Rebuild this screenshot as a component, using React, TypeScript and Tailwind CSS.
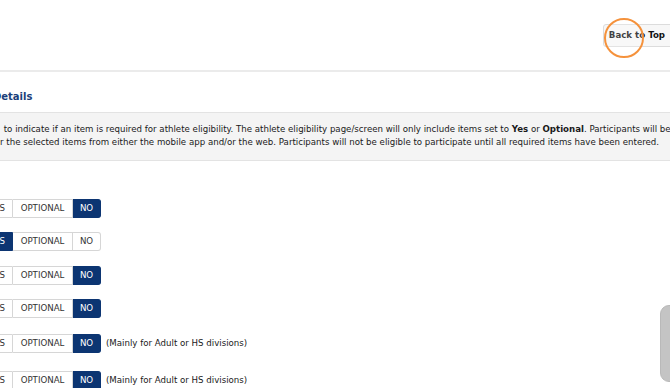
import React from "react";

type Sel = "YES" | "OPTIONAL" | "NO";

function Seg({ sel }: { sel: Sel }) {
  const base = "flex h-[19px] items-center justify-center border";
  const on = "bg-[#0c3572] border-[#0c3572] text-white";
  const off = "bg-white border-[#d6d6d6] text-[#333]";
  return (
    <div className="-ml-[19px] flex">
      <div className={`${base} w-[32px] rounded-l-[3px] ${sel === "YES" ? on : off}`}>YES</div>
      <div className={`${base} w-[60px] border-l-0 ${sel === "OPTIONAL" ? on : off}`}>OPTIONAL</div>
      <div className={`${base} w-[28px] border-l-0 rounded-r-[3px] ${sel === "NO" ? on : off}`}>NO</div>
    </div>
  );
}

export default function App() {
  const rows: { sel: Sel; note?: boolean; mt: string }[] = [
    { sel: "NO", mt: "mt-[38px]" },
    { sel: "YES", mt: "mt-[14px]" },
    { sel: "NO", mt: "mt-[15px]" },
    { sel: "NO", mt: "mt-[14px]" },
    { sel: "NO", note: true, mt: "mt-[16px]" },
    { sel: "NO", note: true, mt: "mt-[18px]" },
  ];
  return (
    <div className="relative h-[388px] w-[670px] overflow-hidden bg-white font-['DejaVu_Sans',Verdana,sans-serif] text-[8.65px] text-[#1a1a1a]">
      <div className="flex h-[72px] items-start justify-end border-b-2 border-[#ebebeb] pt-[24px]">
        <div className="-mr-[3px] flex h-[23px] items-center rounded-[3px] border border-[#dcdcdc] bg-[#f7f7f7] pl-[5px] pr-[7px] font-bold text-[#111]">
          Back to Top
        </div>
      </div>

      <div className="-ml-[7px] mt-[18px] text-[10px] font-bold leading-[13px] text-[#1a3f7a]">Details</div>

      <div className="mt-[9px] border-y border-[#e3e3e3] bg-[#f4f4f4] pt-[10px] pb-[11px] leading-[13px]">
        <div className="whitespace-pre pl-[1px]">
          {" to indicate if an item is required for athlete eligibility. The athlete eligibility page/screen will only include items set to "}
          <b>Yes</b> or <b>Optional</b>. Participants will be
        </div>
        <div className="whitespace-pre">
          r the selected items from either the mobile app and/or the web. Participants will not be eligible to participate until all required items have been entered.
        </div>
      </div>

      <div className="flex flex-col">
        {rows.map((r, i) => (
          <div key={i} className={`flex items-center ${r.mt}`}>
            <Seg sel={r.sel} />
            {r.note && <span className="ml-[5px] whitespace-nowrap">(Mainly for Adult or HS divisions)</span>}
          </div>
        ))}
      </div>

      <div className="absolute left-[604px] top-[18px] h-[40px] w-[40px] rounded-full border-2 border-[#f5923c] bg-white/20" />
      <div className="absolute left-[660px] top-[305px] h-[77px] w-[20px] rounded-[9px] border border-[#b9b9b9] bg-[#c4c4c4]" />
    </div>
  );
}
